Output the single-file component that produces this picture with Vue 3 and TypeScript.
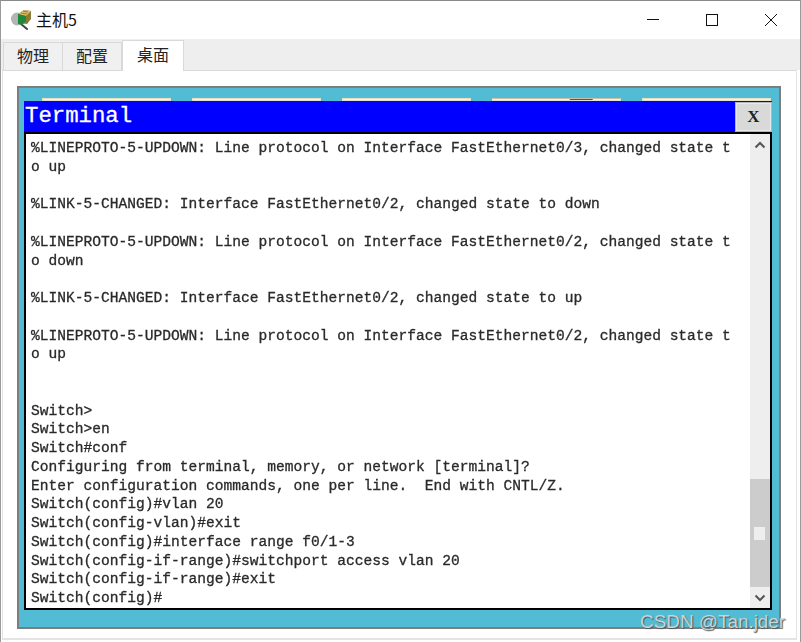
<script setup lang="ts">
const lines: string[] = [
  '%LINEPROTO-5-UPDOWN: Line protocol on Interface FastEthernet0/3, changed state t',
  'o up',
  '',
  '%LINK-5-CHANGED: Interface FastEthernet0/2, changed state to down',
  '',
  '%LINEPROTO-5-UPDOWN: Line protocol on Interface FastEthernet0/2, changed state t',
  'o down',
  '',
  '%LINK-5-CHANGED: Interface FastEthernet0/2, changed state to up',
  '',
  '%LINEPROTO-5-UPDOWN: Line protocol on Interface FastEthernet0/2, changed state t',
  'o up',
  '',
  '',
  'Switch>',
  'Switch>en',
  'Switch#conf',
  'Configuring from terminal, memory, or network [terminal]?',
  'Enter configuration commands, one per line.  End with CNTL/Z.',
  'Switch(config)#vlan 20',
  'Switch(config-vlan)#exit',
  'Switch(config)#interface range f0/1-3',
  'Switch(config-if-range)#switchport access vlan 20',
  'Switch(config-if-range)#exit',
  'Switch(config)#',
]
const tabs = ['物理', '配置', '桌面']
</script>

<template>
  <div class="window">
    <header class="titlebar">
      <svg class="appicon" width="22" height="22" viewBox="0 0 22 22">
        <ellipse cx="7" cy="10" rx="6" ry="6.5" fill="#b4b4b4" />
        <path d="M11 15l6 5" stroke="#444" stroke-width="2" stroke-linecap="round" />
        <path d="M8 5l6-4 7 1v8l-4 5-9-1z" fill="#8a7a35" />
        <path d="M8 5l6-4 7 1-5 5z" fill="#d9bd6c" />
        <path d="M13 2l5 1M11 4l6 1" stroke="#a07f3a" stroke-width="1" />
        <path d="M8 5l8 2v5l-4 4-4-1z" fill="#1c8a38" />
      </svg>
      <span class="title">主机5</span>
      <div class="controls">
        <svg width="14" height="14" viewBox="0 0 14 14"><path d="M1 6.5h12" stroke="#111" fill="none" /></svg>
        <svg width="14" height="14" viewBox="0 0 14 14"><rect x="1.5" y="1.5" width="11" height="11" stroke="#111" fill="none" /></svg>
        <svg width="14" height="14" viewBox="0 0 14 14"><path d="M1 1l12 12M13 1L1 13" stroke="#111" fill="none" /></svg>
      </div>
    </header>
    <nav class="tabs">
      <div v-for="(t, i) in tabs" :key="t" class="tab" :class="{ active: i === 2 }">{{ t }}</div>
    </nav>
    <main class="content">
      <section class="desktop">
        <div class="peek">
          <span v-for="n in 5" :key="n" class="peekbtn"></span>
        </div>
        <div class="terminal">
          <div class="termbar">
            <span class="termtitle">Terminal</span>
            <button class="closebtn">X</button>
          </div>
          <div class="termbody">
            <pre class="output"><template v-for="(l, i) in lines" :key="i">{{ l }}
</template></pre>
            <div class="scroll">
              <div class="arrow">
                <svg width="12" height="8" viewBox="0 0 12 8"><path d="M1.5 6.5L6 2l4.5 4.5" stroke="#555" stroke-width="2" fill="none" /></svg>
              </div>
              <div class="track">
                <div class="thumb"><span class="grip"></span></div>
              </div>
              <div class="arrow">
                <svg width="12" height="8" viewBox="0 0 12 8"><path d="M1.5 1.5L6 6l4.5-4.5" stroke="#555" stroke-width="2" fill="none" /></svg>
              </div>
            </div>
          </div>
        </div>
      </section>
    </main>
    <div class="watermark">CSDN @Tan.jder</div>
  </div>
</template>

<style>
html, body { margin: 0; background: #fff; }
</style>

<style scoped>
.window {
  position: relative;
  width: 801px;
  height: 642px;
  box-sizing: border-box;
  border-top: 1px solid #8a8a8a;
  border-left: 1px solid #9a9a9a;
  border-right: 1px solid #9a9a9a;
  background: #fff;
  overflow: hidden;
  display: flex;
  flex-direction: column;
  font-family: "Noto Sans CJK SC", "Liberation Sans", sans-serif;
}
.titlebar {
  height: 38px;
  display: flex;
  align-items: center;
  padding-left: 9px;
  background: #fff;
}
.appicon { margin-right: 4px; }
.title { font-size: 16px; color: #111; padding-bottom: 3px; }
.controls {
  margin-left: auto;
  display: flex;
  gap: 45px;
  padding-right: 22px;
}
.tabs {
  height: 31px;
  display: flex;
  align-items: flex-end;
  padding-left: 2px;
  background: #eeeeee;
}
.tab {
  width: 60px;
  height: 28px;
  box-sizing: border-box;
  border: 1px solid #d9d9d9;
  border-bottom: none;
  margin-right: -1px;
  padding-bottom: 3px;
  display: flex;
  align-items: center;
  justify-content: center;
  font-size: 16px;
  color: #222;
  background: #f0f0f0;
}
.tab.active {
  width: 62px;
  height: 31px;
  background: #fff;
  margin-left: 1px;
  margin-bottom: -1px;
  padding-bottom: 4px;
  position: relative;
  z-index: 1;
}
.content {
  flex: 1;
  box-sizing: border-box;
  border-top: 1px solid #d9d9d9;
  border-left: 1px solid #e4e4e4;
  border-right: 1px solid #e4e4e4;
  border-bottom: 2px solid #e4e4e4;
  margin: 0 3px 2px 1px;
  padding: 15px 15px 9px 14px;
}
.desktop {
  height: 543px;
  box-sizing: border-box;
  border: 2px solid #7d7d7d;
  background: #52bcd4;
  padding: 10px 7px 17px 5px;
  display: flex;
  flex-direction: column;
}
.peek {
  height: 3px;
  display: flex;
  gap: 21px;
  padding-left: 18px;
  flex: none;
}
.peekbtn {
  width: 129px;
  box-sizing: border-box;
  background: #f2f2f2;
  border: 1px solid #e6e0c8;
}
.peekbtn:nth-child(4) {
  background: linear-gradient(90deg, #f2f2f2 60%, #555 61%, #555 78%, #f2f2f2 79%);
  border-top-color: #c8c0a8;
}
.terminal {
  flex: 1;
  min-height: 0;
  display: flex;
  flex-direction: column;
}
.termbar {
  height: 31px;
  flex: none;
  background: #0000ff;
  display: flex;
  align-items: flex-start;
  justify-content: space-between;
}
.termtitle {
  font-family: "Liberation Mono", monospace;
  font-size: 22.3px;
  line-height: 31px;
  color: #fff;
  -webkit-text-stroke: 0.3px #fff;
  padding-left: 1px;
}
.closebtn {
  width: 37px;
  height: 30px;
  margin-top: 1px;
  box-sizing: border-box;
  padding: 0;
  border: 1px solid #b5b5b5;
  outline: 1px solid #e8e8e8;
  outline-offset: -2px;
  background: #d9d9d9;
  font-family: "Liberation Serif", serif;
  font-size: 17px;
  font-weight: 700;
  color: #222;
}
.termbody {
  flex: 1;
  min-height: 0;
  box-sizing: border-box;
  border: 2px solid #000;
  background: #fff;
  display: flex;
}
.output {
  flex: 1;
  margin: 0;
  padding: 5px 0 0 5px;
  font-family: "Liberation Mono", monospace;
  font-size: 14.58px;
  line-height: 18.75px;
  font-weight: 400;
  color: #2a2a2a;
  -webkit-text-stroke: 0.3px #2a2a2a;
  overflow: hidden;
  filter: blur(0.3px);
}
.scroll {
  width: 20px;
  flex: none;
  display: flex;
  flex-direction: column;
  background: #eeeeee;
}
.arrow {
  height: 21px;
  flex: none;
  display: flex;
  align-items: center;
  justify-content: center;
}
.track {
  flex: 1;
  display: flex;
  flex-direction: column;
  justify-content: flex-end;
}
.thumb {
  height: 108px;
  background: #cccccc;
  display: flex;
  align-items: center;
  justify-content: center;
}
.grip {
  width: 11px;
  height: 13px;
  margin-right: 1px;
  background: #eeeeee;
}
.watermark {
  position: absolute;
  left: 639px;
  top: 610px;
  font-family: "Liberation Sans", sans-serif;
  font-size: 18.9px;
  line-height: 21px;
  color: #c8d4d8;
  text-shadow: 1px 1px 1px #555;
  white-space: nowrap;
}
</style>
